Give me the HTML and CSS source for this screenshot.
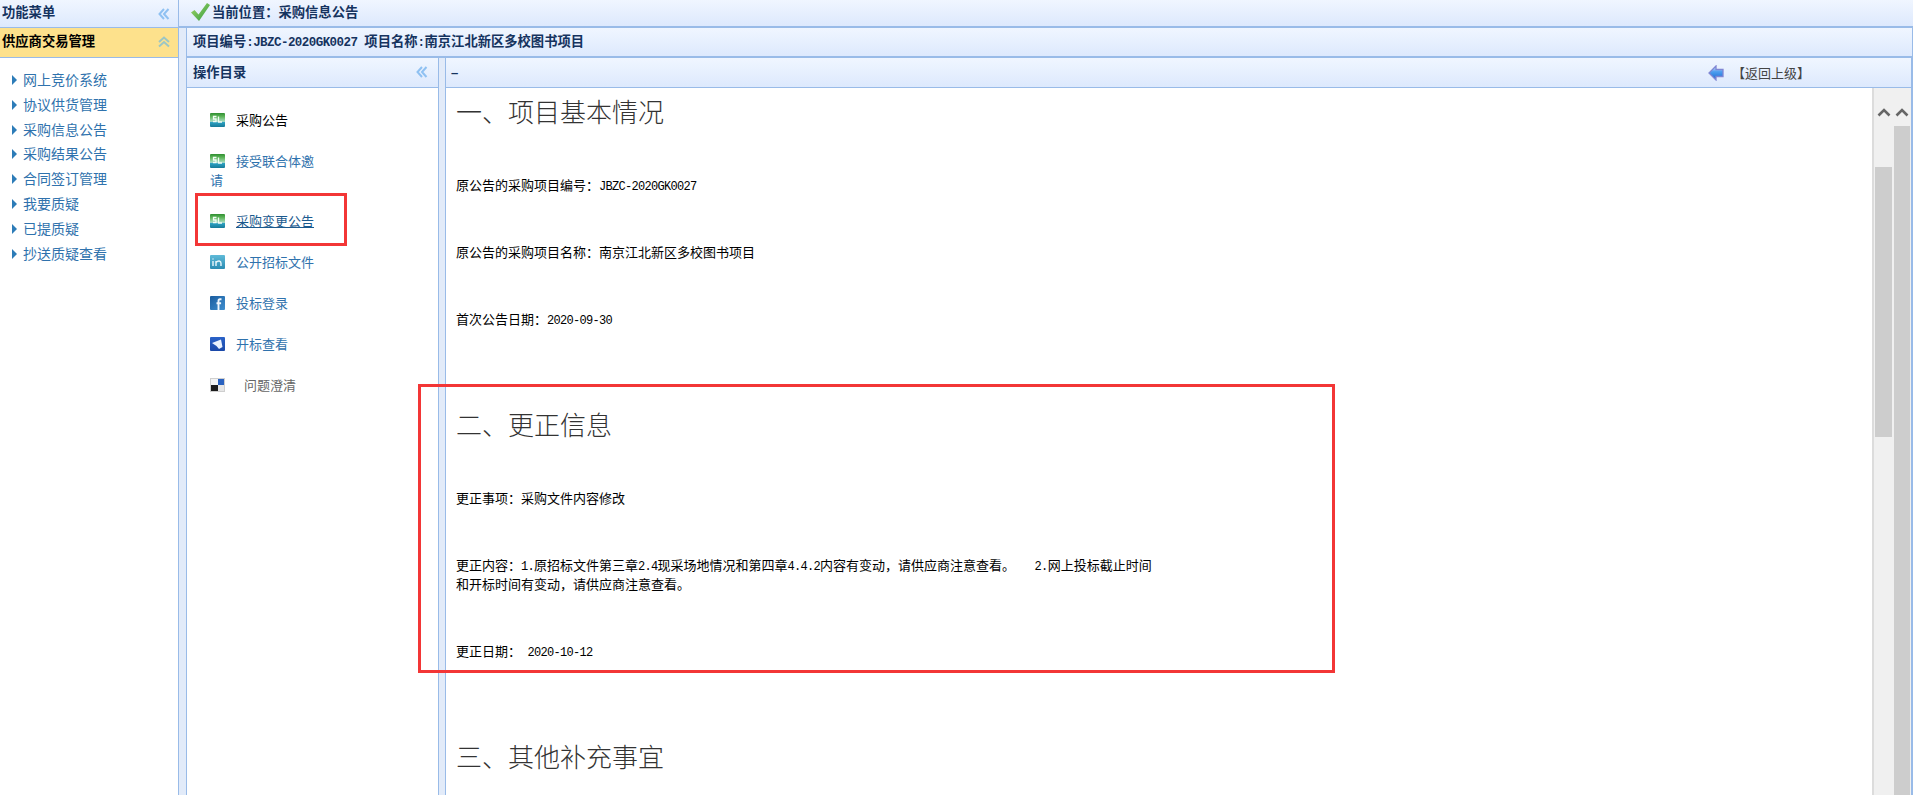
FILE: index.html
```html
<!DOCTYPE html>
<html lang="zh-CN">
<head>
<meta charset="utf-8">
<title>采购信息公告</title>
<link rel="stylesheet" href="styles.css">
</head>
<body>
<svg class="defs" width="0" height="0" aria-hidden="true">
  <defs>
    <linearGradient id="sohu" x1="0" y1="0" x2="0" y2="1">
      <stop offset="0" stop-color="#2f8f30"/><stop offset=".28" stop-color="#62b85e"/><stop offset=".6" stop-color="#a9dcc4"/><stop offset=".68" stop-color="#2c9fc0"/><stop offset="1" stop-color="#177a98"/>
    </linearGradient>
    <linearGradient id="lin" x1="0" y1="0" x2="0" y2="1">
      <stop offset="0" stop-color="#5fbad8"/><stop offset="1" stop-color="#2b8cb3"/>
    </linearGradient>
    <linearGradient id="fb" x1="0" y1="0" x2="1" y2="1">
      <stop offset="0" stop-color="#1a5c9e"/><stop offset="1" stop-color="#3f8fd0"/>
    </linearGradient>
    <linearGradient id="tw" x1="0" y1="0" x2="0" y2="1">
      <stop offset="0" stop-color="#2a62c8"/><stop offset="1" stop-color="#1a48a8"/>
    </linearGradient>
    <linearGradient id="chk" x1="0" y1="0" x2="1" y2="1">
      <stop offset="0" stop-color="#a6d86a"/><stop offset="1" stop-color="#2f9a3e"/>
    </linearGradient>
    <linearGradient id="arr" x1="0" y1="0" x2="0" y2="1">
      <stop offset="0" stop-color="#dfeafc"/><stop offset=".4" stop-color="#4f9ff0"/><stop offset="1" stop-color="#1768d0"/>
    </linearGradient>
    <symbol id="i-sohu" viewBox="0 0 15 14">
      <rect width="15" height="14" rx="1" fill="url(#sohu)"/>
      <path d="M6.500 3.500H3.500V6H6V8.500H3M8.500 3.500V9H12" fill="none" stroke="#f2fbf4" stroke-width="1.300"/>
    </symbol>
    <symbol id="i-lin" viewBox="0 0 15 14">
      <rect width="15" height="14" rx="1" fill="url(#lin)"/>
      <path d="M3 6v5M3 3.500v1M6 11V6M6 7.500c2-2.200 5-2 5 .8V11" fill="none" stroke="#e8f7fc" stroke-width="1.400"/>
    </symbol>
    <symbol id="i-fb" viewBox="0 0 15 14">
      <rect width="15" height="14" rx="1" fill="url(#fb)"/>
      <path d="M11.500 3.200H10c-1 0-1.500.6-1.500 1.600V14M6.500 7.300h4.600" fill="none" stroke="#f0f6fc" stroke-width="1.900"/>
    </symbol>
    <symbol id="i-tw" viewBox="0 0 15 14">
      <rect width="15" height="14" rx="1" fill="url(#tw)"/>
      <path d="M2 6l9-3.500 1.500 7.500-3.500 2L6.500 9z" fill="#eaf2fd"/>
    </symbol>
    <symbol id="i-del" viewBox="0 0 15 14">
      <rect width="15" height="14" fill="#cfcfcf"/>
      <rect x="8" y="1" width="6" height="6" fill="#2a62c0"/>
      <rect x="1" y="7" width="7" height="6" fill="#1c1c1c"/>
      <rect x="8" y="7" width="6" height="6" fill="#e6e6e6"/>
      <rect x="1" y="1" width="7" height="6" fill="#f3f3f3"/>
    </symbol>
    <symbol id="i-left2" viewBox="0 0 12 12">
      <path d="M6 1 1.500 6 6 11M10.500 1 6 6l4.500 5" fill="none" stroke="currentColor" stroke-width="2"/>
    </symbol>
    <symbol id="i-up2" viewBox="0 0 12 12">
      <path d="M1 6 6 1.500 11 6M1 10.500 6 6l5 4.500" fill="none" stroke="currentColor" stroke-width="2"/>
    </symbol>
    <symbol id="i-up" viewBox="0 0 14 9">
      <path d="M1.500 7.500 7 2l5.500 5.500" fill="none" stroke="#666" stroke-width="2.600"/>
    </symbol>
  </defs>
</svg>

<div class="app">
  <aside class="side">
    <div class="head side-head">
      <span class="title">功能菜单</span>
      <svg class="chev"><use href="#i-left2"/></svg>
    </div>
    <div class="group">
      <span>供应商交易管理</span>
      <svg class="chev up"><use href="#i-up2"/></svg>
    </div>
    <ul class="menu">
      <li>网上竞价系统</li>
      <li>协议供货管理</li>
      <li>采购信息公告</li>
      <li>采购结果公告</li>
      <li>合同签订管理</li>
      <li>我要质疑</li>
      <li>已提质疑</li>
      <li>抄送质疑查看</li>
    </ul>
  </aside>

  <main class="main">
    <div class="head crumb">
      <svg class="check" viewBox="0 0 19 18"><path d="M0 9.500 3.500 7 7.500 11.500 16 0 19 2 8 18z" fill="url(#chk)"/></svg>
      <span class="title">当前位置：采购信息公告</span>
    </div>
    <div class="head project">
      <span class="title">项目编号<span class="mb">:JBZC-2020GK0027 </span>项目名称<span class="mb">:</span>南京江北新区多校图书项目</span>
    </div>
    <div class="split">
      <section class="ops">
        <div class="head ops-head">
          <span class="title">操作目录</span>
          <svg class="chev"><use href="#i-left2"/></svg>
        </div>
        <ul class="oplist">
          <li class="current"><svg class="ico"><use href="#i-sohu"/></svg>采购公告</li>
          <li><svg class="ico"><use href="#i-sohu"/></svg>接受联合体邀请</li>
          <li class="hover"><svg class="ico"><use href="#i-sohu"/></svg><span>采购变更公告</span></li>
          <li><svg class="ico"><use href="#i-lin"/></svg>公开招标文件</li>
          <li><svg class="ico"><use href="#i-fb"/></svg>投标登录</li>
          <li><svg class="ico"><use href="#i-tw"/></svg>开标查看</li>
          <li class="gray"><svg class="ico"><use href="#i-del"/></svg>问题澄清</li>
        </ul>
      </section>

      <section class="content">
        <div class="head content-head">
          <span class="dash">–</span>
          <span class="back">
            <svg class="arrow" viewBox="0 0 16 16"><path d="M8 1 1 8l7 7v-3.500h7v-7H8z" fill="url(#arr)" stroke="#7f86d4" stroke-width="1.300"/></svg>
            <span>【返回上级】</span>
          </span>
        </div>
        <div class="body">
          <article class="doc">
            <h2>一、项目基本情况</h2>
            <p>原公告的采购项目编号：<span class="m">JBZC-2020GK0027</span></p>
            <p>原公告的采购项目名称：南京江北新区多校图书项目</p>
            <p>首次公告日期：<span class="m">2020-09-30</span></p>
            <h2>二、更正信息</h2>
            <p>更正事项：采购文件内容修改</p>
            <p>更正内容：<span class="m">1.</span>原招标文件第三章<span class="m">2.4</span>现采场地情况和第四章<span class="m">4.4.2</span>内容有变动，请供应商注意查看。<span class="m">&nbsp;&nbsp;&nbsp;2.</span>网上投标截止时间<br>和开标时间有变动，请供应商注意查看。</p>
            <p>更正日期：<span class="m">&nbsp;2020-10-12</span></p>
            <h2>三、其他补充事宜</h2>
          </article>
          <div class="scrolls">
            <div class="track inner">
              <svg class="up-btn"><use href="#i-up"/></svg>
              <div class="thumb"></div>
            </div>
            <div class="track outer">
              <svg class="up-btn"><use href="#i-up"/></svg>
              <div class="thumb"></div>
            </div>
          </div>
        </div>
      </section>
    </div>
  </main>

  <div class="mark mark-nav"></div>
  <div class="mark mark-doc"></div>
</div>
</body>
</html>
```
FILE: styles.css
```css
* { box-sizing: border-box; }
html, body { margin: 0; height: 100%; overflow: hidden; }
body {
  background: #e2ebf9;
  font-family: "Noto Sans CJK SC", "Liberation Sans", sans-serif;
  font-size: 13px;
  color: #000;
}
ul { list-style: none; margin: 0; padding: 0; }
.defs { position: absolute; }

.app { position: relative; display: flex; height: 795px; }

/* shared panel header */
.head {
  display: flex;
  align-items: center;
  background: linear-gradient(#f0f6ff, #dde9fd);
  border-bottom: 1px solid #99bbe8;
}
.title { font-weight: 700; color: #15335f; font-size: 13.300px; white-space: pre; }
.chev { width: 12px; height: 12px; color: #8fc1f2; flex: none; }

/* left menu */
.side {
  width: 179px;
  flex: none;
  background: #fff;
  border-right: 1px solid #99bbe8;
}
.side-head {
  height: 28px;
  padding: 0 8px 4px 2px;
  justify-content: space-between;
}
.side-head .chev { margin-top: 4px; }
.group {
  height: 30px;
  padding: 0 8px 4px 2px;
  display: flex;
  align-items: center;
  justify-content: space-between;
  background: #fde18c;
  border-bottom: 1px solid #99bbe8;
  font-weight: 700;
  font-size: 13.300px;
}
.chev.up { color: #9cc6c4; margin-top: 2px; }
.menu { padding-top: 9px; }
.menu li {
  position: relative;
  height: 24.800px;
  line-height: 24.800px;
  padding-left: 23px;
  font-size: 14px;
  color: #2f72ad;
}
.menu li::before {
  content: "";
  position: absolute;
  left: 12px;
  top: 8px;
  border-left: 5px solid #2d7cb8;
  border-top: 5px solid transparent;
  border-bottom: 5px solid transparent;
}

/* main area */
.main { flex: 1; min-width: 0; display: flex; flex-direction: column; }
.crumb {
  height: 28px;
  padding: 0 0 4px 12px;
  border-bottom-width: 2px;
}
.check { width: 19px; height: 18px; margin: 2px 2px 0 0; flex: none; }
.project {
  height: 30px;
  margin-left: 7px;
  padding: 0 0 4px 6px;
  border-left: 1px solid #99bbe8;
  border-right: 1px solid #99bbe8;
  border-bottom-width: 2px;
}
.mb {
  font-family: "Liberation Mono", monospace;
  font-size: 12.500px;
  letter-spacing: -.55px;
  line-height: 1;
}

.split { flex: 1; min-height: 0; display: flex; margin-left: 7px; gap: 6px; }

.ops {
  width: 253px;
  flex: none;
  background: #fff;
  border-left: 1px solid #99bbe8;
  border-right: 1px solid #99bbe8;
}
.ops-head {
  height: 30px;
  padding: 0 10px 2px 6px;
  justify-content: space-between;
}
.oplist { width: 133px; padding: 10.500px 0 0 23px; }
.oplist li {
  padding: 11px 0;
  line-height: 19px;
  color: #2f72ad;
}
.ico { width: 15px; height: 14px; margin-right: 11px; vertical-align: -2px; }
.oplist .current { color: #000; }
.oplist .hover { color: #1b5a8e; }
.oplist .hover span { text-decoration: underline; }
.oplist .gray { color: #666; }
.gray .ico { margin-right: 19px; }

.content {
  flex: 1;
  min-width: 0;
  display: flex;
  flex-direction: column;
  background: #fff;
  border-left: 1px solid #99bbe8;
  border-right: 2px solid #99bbe8;
}
.content-head {
  height: 30px;
  flex: none;
  padding: 0 101px 0 5px;
  justify-content: space-between;
}
.dash { font-family: "Liberation Sans", sans-serif; color: #15335f; font-weight: 700; }
.back { display: flex; align-items: center; color: #444; gap: 8px; }
.arrow { width: 16px; height: 16px; flex: none; }

.body { flex: 1; min-height: 0; display: flex; overflow: hidden; }
.doc { flex: 1; min-width: 0; padding: 5px 0 0 10px; overflow: hidden; }
.doc h2 {
  margin: 0 0 46px;
  font-size: 26px;
  line-height: 36px;
  font-weight: 300;
  color: #333;
}
.doc p { margin: 0 0 48px; line-height: 19px; }
.doc p + h2 { margin-top: 78px; }
.m {
  font-family: "Liberation Mono", monospace;
  font-size: 12px;
  letter-spacing: -.7px;
  line-height: 1;
}

/* two stacked scrollbars */
.scrolls {
  flex: none;
  display: flex;
  width: 39px;
  background: #f0f0f0;
  border-left: 2px solid #dcdcdc;
}
.track { display: flex; flex-direction: column; align-items: center; }
.up-btn { width: 14px; height: 9px; margin-top: 20px; flex: none; }
.thumb { background: #cdcdcd; }
.track.inner { width: 19px; }
.inner .thumb { width: 17px; height: 270px; margin-top: 50px; }
.track.outer { width: 18px; }
.outer .thumb { width: 16px; flex: 1; margin-top: 9px; }

/* red annotation frames over the screenshot */
.mark { position: absolute; border: 3px solid #f33636; pointer-events: none; }
.mark-nav { left: 195px; top: 193px; width: 152px; height: 53px; }
.mark-doc { left: 418px; top: 384px; width: 917px; height: 289px; }
```
